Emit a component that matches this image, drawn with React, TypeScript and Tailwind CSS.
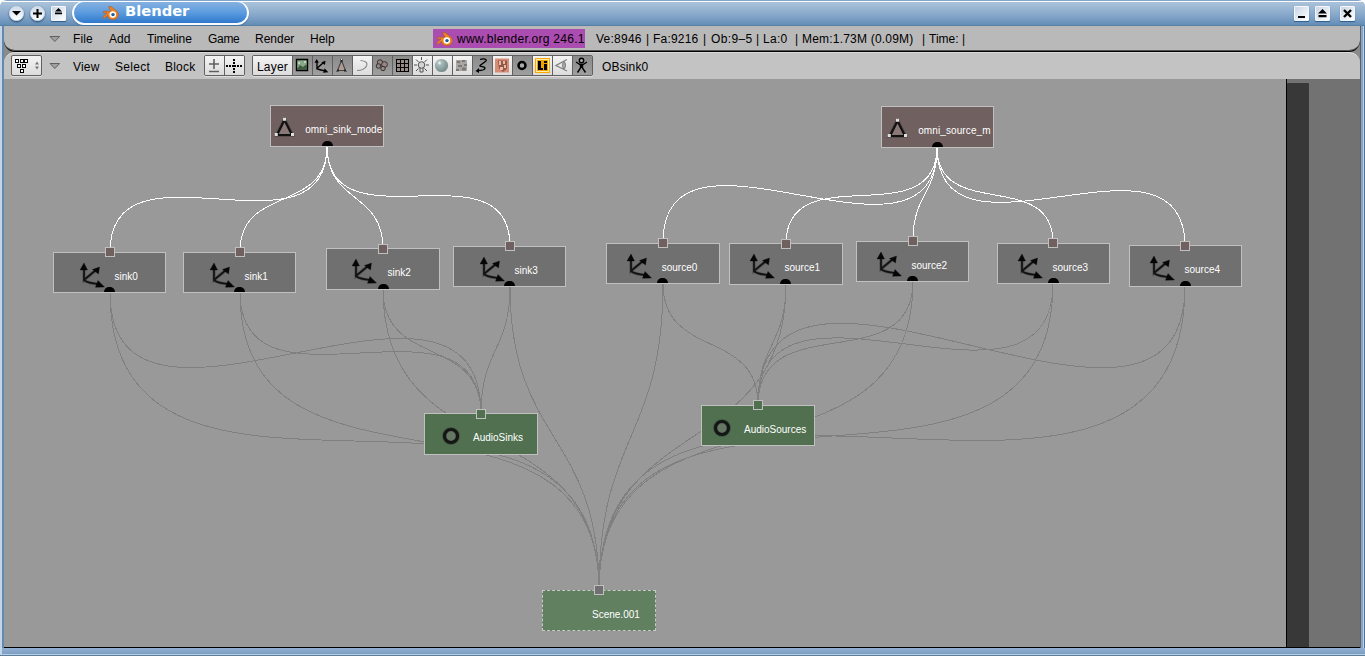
import React from "react";

type Kind = "mesh" | "object" | "group" | "scene";
type NodeDef = {
  id: string;
  kind: Kind;
  x: number;
  y: number;
  w: number;
  h: number;
  px: number;
  py?: number;
  dot?: number;
  icon: [number, number];
  tx: number;
  base: number;
  track?: string;
};

const nodes: NodeDef[] = [
  { id: "omni_sink_mode", kind: "mesh", x: 270, y: 105, w: 114, h: 42, px: 327, dot: 322, icon: [274, 117], tx: 305, base: 133, track: "tracking-[0.12px]" },
  { id: "omni_source_m", kind: "mesh", x: 881, y: 106, w: 113, h: 42, px: 937, dot: 932, icon: [887, 118], tx: 918, base: 134, track: "tracking-[0.1px]" },
  { id: "sink0", kind: "object", x: 53, y: 252, w: 113, h: 41, px: 110, py: 247, dot: 104, icon: [80, 263], tx: 114.3, base: 280 },
  { id: "sink1", kind: "object", x: 183, y: 252, w: 113, h: 41, px: 240, py: 247, dot: 234, icon: [210, 263], tx: 244.3, base: 280 },
  { id: "sink2", kind: "object", x: 326, y: 248, w: 114, h: 42, px: 383, py: 244, dot: 378, icon: [352, 259], tx: 387.3, base: 276 },
  { id: "sink3", kind: "object", x: 453, y: 246, w: 113, h: 41, px: 510, py: 241, dot: 504, icon: [480, 257], tx: 514.3, base: 274 },
  { id: "source0", kind: "object", x: 606, y: 243, w: 114, h: 41, px: 663, py: 238, dot: 657, icon: [627, 254], tx: 661.5, base: 271 },
  { id: "source1", kind: "object", x: 729, y: 243, w: 114, h: 42, px: 786, py: 239, dot: 780, icon: [750, 254], tx: 784.3, base: 271 },
  { id: "source2", kind: "object", x: 856, y: 241, w: 113, h: 41, px: 913, py: 236, dot: 907, icon: [877, 252], tx: 911.3, base: 269 },
  { id: "source3", kind: "object", x: 997, y: 243, w: 113, h: 41, px: 1053, py: 238, dot: 1048, icon: [1018, 254], tx: 1052.3, base: 271 },
  { id: "source4", kind: "object", x: 1129, y: 245, w: 113, h: 42, px: 1185, py: 241, dot: 1180, icon: [1150, 256], tx: 1184.3, base: 273 },
  { id: "AudioSinks", kind: "group", x: 424, y: 413, w: 114, h: 42, px: 481, py: 409, icon: [441, 426], tx: 472.8, base: 441 },
  { id: "AudioSources", kind: "group", x: 701, y: 405, w: 114, h: 41, px: 758, py: 400, icon: [712, 418], tx: 743.8, base: 433 },
  { id: "Scene.001", kind: "scene", x: 542, y: 590, w: 114, h: 41, px: 599, py: 585, icon: [0, 0], tx: 591.8, base: 618 },
];

const byId = Object.fromEntries(nodes.map((n) => [n.id, n]));
const sinks = ["sink0", "sink1", "sink2", "sink3"];
const sources = ["source0", "source1", "source2", "source3", "source4"];

const fill: Record<Kind, string> = {
  mesh: "bg-[#706060]",
  object: "bg-[#707070]",
  group: "bg-[#507050]",
  scene: "bg-[#608060]",
};

const CANVAS_X = 4;
const CANVAS_Y = 79;

function link(from: string, to: string) {
  const a = byId[from];
  const b = byId[to];
  const x1 = a.px;
  const y1 = a.y + a.h - 1;
  const x2 = b.px;
  const y2 = (b.py ?? b.y) + 5;
  const d = Math.hypot(x2 - x1, y2 - y1) / 2;
  return `M${x1} ${y1}C${x1} ${y1 + d} ${x2} ${y2 - d} ${x2} ${y2}`;
}

function Axes({ size }: { size: number }) {
  return (
    <svg width={size} height={size} viewBox="0 0 24 24" className="overflow-visible">
      <path d="M4 5V17L16 7M4.500 17.500C8 20 12 20.500 18 21" fill="none" stroke="#000" strokeOpacity=".25" strokeWidth="3.200" />
      <path d="M4 5V17L16 7M4.500 17.500C8 20 12 20.500 18 21" fill="none" stroke="#111" strokeWidth="1.700" />
      <path d="M4 0L7.500 7H0zM19.500 4L18.500 11 12.500 6.500zM24.500 24L15.500 24.300 18 17.500z" fill="#060606" stroke="#000" strokeOpacity=".3" />
    </svg>
  );
}

function Mesh({ size }: { size: number }) {
  return (
    <svg width={size} height={size} viewBox="0 0 21 21">
      <path d="M10.500 3L18 18H3z" fill="#8a7878" stroke="#000" strokeOpacity=".25" strokeWidth="3.600" />
      <path d="M10.500 3L18 18H3z" fill="#8a7878" stroke="#111" strokeWidth="2.200" />
      <path d="M9 .8h3v3H9zM.8 16h3v3h-3zM17 16h3v3h-3z" fill="#dedede" />
    </svg>
  );
}

function Ring({ size }: { size: number }) {
  return (
    <svg width={size} height={size} viewBox="0 0 20 20">
      <circle cx="10" cy="10" r="6.500" fill="none" stroke="#000" strokeOpacity=".22" strokeWidth="5" />
      <circle cx="10" cy="10" r="6.500" fill="#777f77" fillOpacity=".5" stroke="#151515" strokeWidth="3.200" />
    </svg>
  );
}

function Logo({ className = "" }: { className?: string }) {
  return (
    <svg width="17" height="14" viewBox="0 0 17 14" className={className}>
      <path d="M6.500 .800L9 .400 15 5.200A5 5 0 0 1 11 13.600 5.200 5.200 0 0 1 5.500 9.600L2 12.400 .600 11 5 7H1.600V5.200H9z" fill="#f08020" stroke="#a85a28" strokeWidth=".6" />
      <circle cx="10.800" cy="8.600" r="3.300" fill="#fff" />
      <circle cx="11" cy="8.600" r="1.700" fill="#1e5a96" />
    </svg>
  );
}

function GraphNode({ n }: { n: NodeDef }) {
  return (
    <>
      <div
        className={`absolute border ${n.kind === "scene" ? "border-dashed border-[#c8c8c8]" : "border-[#c0c0c0]"} ${fill[n.kind]}`}
        style={{ left: n.x - CANVAS_X, top: n.y - CANVAS_Y, width: n.w, height: n.h }}
      />
      <div className="absolute" style={{ left: n.icon[0] - CANVAS_X, top: n.icon[1] - CANVAS_Y }}>
        {n.kind === "object" && <Axes size={24} />}
        {n.kind === "mesh" && <Mesh size={21} />}
        {n.kind === "group" && <Ring size={20} />}
      </div>
      <span
        className={`absolute whitespace-pre text-[10px] leading-3 text-white ${n.track ?? ""}`}
        style={{ left: n.tx + 0.2 - CANVAS_X, top: n.base - 9.5 - CANVAS_Y }}
      >
        {n.id}
      </span>
      {n.py !== undefined && (
        <div
          className={`absolute size-2.5 border border-[#c0c0c0] ${n.kind === "object" ? "bg-[#706060]" : n.kind === "group" ? "bg-[#507050]" : "bg-[#707070]"}`}
          style={{ left: n.px - 5 - CANVAS_X, top: n.py - CANVAS_Y }}
        />
      )}
      {n.dot !== undefined && (
        <div
          className="absolute h-[5px] w-[11px] rounded-t-[5px] bg-black"
          style={{ left: n.dot - CANVAS_X, top: n.y + n.h - 6 - CANVAS_Y }}
        />
      )}
    </>
  );
}

function Canvas() {
  return (
    <div className="relative h-[568px] w-[1282px] overflow-hidden bg-[#999999]">
      <svg className="absolute inset-0" width="1282" height="568" viewBox="4 79 1282 568" fill="none" shapeRendering="crispEdges">
        <g stroke="#808080">
          {sinks.map((s) => <path key={s} d={link(s, "AudioSinks")} />)}
          {sources.map((s) => <path key={s} d={link(s, "AudioSources")} />)}
          {[...sinks, ...sources].map((s) => <path key={s} d={link(s, "Scene.001")} />)}
        </g>
        <g stroke="#fff">
          {sinks.map((s) => <path key={s} d={link("omni_sink_mode", s)} />)}
          {sources.map((s) => <path key={s} d={link("omni_source_m", s)} />)}
        </g>
      </svg>
      {nodes.map((n) => <GraphNode key={n.id} n={n} />)}
    </div>
  );
}

function RoundButton({ children }: { children: React.ReactNode }) {
  return (
    <div className="size-[15px] rounded-full border border-[#d5e0ec] bg-linear-to-b from-[#cfdbe8] to-white shadow-[0_1px_2px_#24466e]">
      <svg width="13" height="13" viewBox="0 0 13 13">{children}</svg>
    </div>
  );
}

function SquareButton({ children, className = "" }: { children: React.ReactNode; className?: string }) {
  return (
    <div className={`size-[15px] rounded-[1px] border border-[#f4f8fc] bg-linear-to-br from-[#c9d6e4] to-white shadow-[0_1px_1px_#2c5a8c] ${className}`}>
      <svg width="13" height="13" viewBox="0 0 13 13">{children}</svg>
    </div>
  );
}

function TitleBar() {
  return (
    <div className="flex h-[25px] shrink-0 items-start border-t border-white bg-linear-to-b from-[#a8c1d9] from-5% via-[#83a4c8] via-60% to-[#5f8ab3] pl-[9px] pr-[10px] shadow-[inset_0_-1px_0_#5680a6]">
      <div className="mt-[4px] flex gap-[6px]">
        <RoundButton><path d="M2 4h9l-4.500 4.500z" fill="#000" /></RoundButton>
        <RoundButton><path d="M5.500 2h2v3.500h3.500v2h-3.500v3.500h-2v-3.500h-3.500v-2h3.500z" fill="#000" /></RoundButton>
        <SquareButton><path d="M3 4.500L6.500 1 10 4.500zM3 5.500h7v1.700H3z" fill="#000" /></SquareButton>
      </div>
      <div className="-mt-px ml-[6px] flex h-6 w-[177px] items-start rounded-[12px] border-2 border-t border-[#f8fbff] bg-linear-to-b from-[#86b1df] via-[#5799de] via-55% to-[#2f78cc] pl-[28px] shadow-[0_1px_1px_#456f9c]">
        <Logo className="mt-[4px]" />
        <span className="ml-[6px] -mt-px font-['DejaVu_Sans'] text-[14.7px] font-bold leading-5 text-white">Blender</span>
      </div>
      <div className="ml-auto mt-[4px] flex">
        <SquareButton><path d="M3 9h7v2H3z" fill="#000" /></SquareButton>
        <SquareButton className="ml-[6px]"><path d="M2 6.500L6.500 2 11 6.500zM2.500 8h8v2.200h-8z" fill="#000" /></SquareButton>
        <SquareButton className="ml-[10px]"><path d="M3 3L10 10M10 3L3 10" stroke="#000" strokeWidth="2.400" /></SquareButton>
      </div>
    </div>
  );
}

function MenuTriangle() {
  return (
    <svg width="12" height="8" viewBox="0 0 12 8" className="shrink-0">
      <path d="M1 1.500h9.600L5.800 6.500z" fill="#a0a0a0" stroke="#606060" />
    </svg>
  );
}

const item = "shrink-0 whitespace-pre";

function InfoHeader() {
  return (
    <div className="h-[26px] shrink-0 bg-[#8a8a8a]">
      <div className="flex h-[26px] items-center rounded-b-[11px] border-b border-black bg-[#b9b9b9] pl-[45px] text-[12px] leading-4 text-black shadow-[inset_0_-1px_0_#555]">
        <MenuTriangle />
        <span className={`${item} ml-[12px] mt-px w-9 tracking-[0.1px]`}>File</span>
        <span className={`${item} mt-px w-[38px]`}>Add</span>
        <span className={`${item} mt-px w-[61px]`}>Timeline</span>
        <span className={`${item} mt-px w-[47px] tracking-[-0.3px]`}>Game</span>
        <span className={`${item} mt-px w-[55px]`}>Render</span>
        <span className={`${item} mt-px w-[123px]`}>Help</span>
        <div className="flex h-[19px] w-[152px] shrink-0 items-center bg-[#ab4cb0] pl-[3px]">
          <Logo className="shrink-0" />
          <span className={`${item} ml-1 mt-px tracking-[0.27px]`}>www.blender.org 246.1</span>
        </div>
        <span className={`${item} ml-[11px] mt-px w-[50px] tracking-[0.25px]`}>Ve:8946</span>
        <span className={`${item} mt-px w-[7px]`}>|</span>
        <span className={`${item} mt-px w-[50px] tracking-[0.2px]`}>Fa:9216</span>
        <span className={`${item} mt-px w-[8px]`}>|</span>
        <span className={`${item} mt-px w-[45px] tracking-[0.35px]`}>Ob:9–5</span>
        <span className={`${item} mt-px w-[7px]`}>|</span>
        <span className={`${item} mt-px w-[32px] tracking-[0.3px]`}>La:0</span>
        <span className={`${item} mt-px w-[7px]`}>|</span>
        <span className={`${item} mt-px w-[120px] tracking-[0.2px]`}>Mem:1.73M (0.09M)</span>
        <span className={`${item} mt-px w-[7px]`}>|</span>
        <span className={`${item} mt-px w-[33px]`}>Time:</span>
        <span className={`${item} mt-px`}>|</span>
      </div>
    </div>
  );
}

const layerIcons: { on: boolean; icon: React.ReactNode }[] = [
  { on: true, icon: <><path d="M3.500 3.500h11v11h-11z" fill="#88a888" stroke="#000" strokeWidth="1.400" /><path d="M4 13l3-4 3 2 3-2.500 1 1v4.500H4z" fill="#405c40" /><path d="M5 6h2v2H5zM11 5h2v2h-2z" fill="#b8d8b8" /></> },
  { on: true, icon: <g transform="translate(1.500 3) scale(.55)"><path d="M4.500 5V17L16 7M5 17.500C8 20 12 20.500 18 21" fill="none" stroke="#000" strokeWidth="2.400" /><path d="M4 0L8 7H0zM20 3L19 11 12.500 6zM25 24L15.500 25 18.500 17z" /></g> },
  { on: true, icon: <><path d="M8.500 4.500L12.500 14.500h-8z" fill="#b09a94" stroke="#444" strokeWidth="1.100" /><path d="M7.500 3h2v3h-2zM3 13.500h3v2H3zM11 13.500h3v2h-3z" fill="#222" /><path d="M8 3h1v1H8zM3 13.500h1v1H3zM13 13.500h1v1h-1z" fill="#eee" /></> },
  { on: false, icon: <path d="M7.500 4.500C13 5 15 7 13.500 10C12 13 9 14.500 4 14.500" fill="none" stroke="#888" strokeWidth="1.200" /> },
  { on: true, icon: <g fill="#9b8585" stroke="#333" strokeWidth="1"><circle cx="7" cy="6.500" r="2.700" /><circle cx="11.500" cy="8.500" r="2.900" /><circle cx="5.500" cy="10" r="2.300" /><circle cx="10" cy="12.500" r="2.200" /></g> },
  { on: true, icon: <path d="M3.500 3.500h12v12h-12zM7.500 3.500v12M11.500 3.500v12M3.500 7.500h12M3.500 11.500h12" fill="#998a8a" stroke="#000" strokeWidth="1.100" shapeRendering="crispEdges" /> },
  { on: false, icon: <g stroke="#505050" fill="none"><circle cx="8.500" cy="9" r="3.300" fill="#d5d5d5" /><path d="M7 12v4h3v-4M8.500 1v3M1 9h3M13 9h3M3 3.500l2.500 2.500M14 3.500L11.500 6M3 15l2.500-2.500M14 15l-2.500-2.500" /></g> },
  { on: false, icon: <><defs><radialGradient id="ball" cx=".35" cy=".3" r=".7"><stop offset="0" stopColor="#f4ffff" /><stop offset=".25" stopColor="#a7b9b9" /><stop offset="1" stopColor="#788c8c" /></radialGradient></defs><circle cx="8.500" cy="9.500" r="6.600" fill="url(#ball)" /></> },
  { on: false, icon: <><path d="M3 4h11v11H3z" fill="#aaa6a4" /><path d="M4 5h3v2H4zM9 4h3v2H9zM11 8h3v2h-3zM5 9h4v2H5zM3 13h3v2H3zM9 11.500h4v3H9z" fill="#7c7876" /></> },
  { on: true, icon: <><path d="M7 3.500c4-1.500 7 0 6 1.500L7 9.500c-1 1.500 5 .5 5 2.500s-4 2.500-7 2.500" fill="none" stroke="#000" strokeWidth="1.300" /><path d="M2.500 15l3.500-3v5z" /></> },
  { on: false, icon: <><path d="M2 2.500h14v14H2z" fill="#d98c74" /><path d="M5 4.500h9v8l-4 3.500-4-3.500z" fill="#8d5a4c" /><path d="M6 5h2v4H6zM10 5h2v3h-2zM11 9h2v3h-2zM7 11h3v3H7z" fill="#f0b8a0" /></> },
  { on: true, icon: <circle cx="9" cy="9.500" r="3.500" fill="#aaa" stroke="#000" strokeWidth="2.500" /> },
  { on: false, icon: <g shapeRendering="crispEdges"><path d="M2 2h15v15H2z" fill="#ffa800" /><path d="M3.500 3.500h12v12h-12z" fill="#f0a000" stroke="#fff0b0" strokeWidth="1" /><path d="M5 5h3v7h2v2H5zM11 5h3v2h-3zM11 8h3v6h-3z" fill="#000" /></g> },
  { on: false, icon: <><path d="M14 3.500L3 9.500l11 5.500" fill="none" stroke="#808080" strokeWidth="1.300" /><path d="M11 5.500c-2 2-2 6 0 7.500 2-1.500 2-6 0-7.500z" fill="#aaa" stroke="#777" /></> },
  { on: true, icon: <><circle cx="8.500" cy="4.500" r="2.200" fill="#aaa" stroke="#000" strokeWidth="1.400" /><path d="M3 6l4 2.500h3L14 6M8.500 8v4M7.500 8v4l-3 4.500M9.500 8v4l3 4.500" fill="none" stroke="#000" strokeWidth="1.400" /></> },
];

function ButtonGroup({ children, className = "" }: { children: React.ReactNode; className?: string }) {
  return (
    <div className={`flex h-[21px] shrink-0 overflow-hidden rounded-[2px] border border-[#606060] shadow-[0_1px_0_#dedede] ${className}`}>
      {children}
    </div>
  );
}

const raised = "bg-linear-to-b from-[#f4f4f4] to-[#dcdcdc]";
const pressed = "bg-linear-to-b from-[#8b8b8b] to-[#9f9f9f]";

function OopsHeader() {
  return (
    <div className="h-[27px] shrink-0 bg-[#8a8a8a]">
      <div className="flex h-[27px] items-start rounded-t-[11px] border-t border-[#dadada] bg-[#c3c3c3] pl-[7px] pt-[2px] text-[12px] leading-4 text-black">
        <ButtonGroup className={`w-[31px] ${raised}`}>
          <svg width="29" height="19" viewBox="0 0 29 19">
            <g fill="#fff" stroke="#000" shapeRendering="crispEdges">
              <path d="M3.500 3.500h3v3h-3zM8.500 3.500h3v3h-3zM12.500 3.500h3v3h-3zM5.500 8.500h3v3h-3zM10.500 8.500h3v3h-3zM8.500 13.500h3v3h-3z" />
            </g>
            <path d="M23 8.500l2-3 2 3zM23 10.500l2 3 2-3z" fill="#777" />
          </svg>
        </ButtonGroup>
        <div className="ml-[7px] mt-[7px]"><MenuTriangle /></div>
        <span className={`${item} ml-[12px] mt-1 w-[42px] tracking-[0.2px]`}>View</span>
        <span className={`${item} mt-1 w-[50px] tracking-[0.3px]`}>Select</span>
        <span className={`${item} mt-1 w-[39px] tracking-[0.2px]`}>Block</span>
        <ButtonGroup className="w-[41px]">
          <div className={`w-5 border-r border-[#606060] ${raised}`}>
            <svg width="19" height="19" viewBox="0 0 19 19"><path d="M9 3v10M4 8h10M4 15.500h10" stroke="#606060" strokeWidth="1.600" /></svg>
          </div>
          <div className={`w-5 ${raised}`}>
            <svg width="19" height="19" viewBox="0 0 19 19" shapeRendering="crispEdges">
              <path d="M8 3h2v2H8zM8 6h2v2H8zM8 12h2v2H8zM8 15h2v2H8zM1 9h2v2H1zM4 9h2v2H4zM7 9h4v2H7zM12 9h2v2h-2zM15 9h2v2h-2z" />
            </svg>
          </div>
        </ButtonGroup>
        <ButtonGroup className="ml-[7px] w-[341px]">
          <div className={`w-[39px] shrink-0 whitespace-pre pl-1 pt-[3px] ${raised}`}><span className="tracking-[0.2px]">Layer</span></div>
          {layerIcons.map((b, i) => (
            <div key={i} className={`w-5 shrink-0 border-l border-[#606060] ${b.on ? pressed : raised}`}>
              <svg width="19" height="19" viewBox="0 0 19 19">{b.icon}</svg>
            </div>
          ))}
        </ButtonGroup>
        <span className={`${item} ml-[9px] mt-1 tracking-[0.15px]`}>OBsink0</span>
      </div>
    </div>
  );
}

export default function App() {
  return (
    <div className="flex h-[656px] w-[1365px] flex-col overflow-hidden bg-white font-['Liberation_Sans',Arial,sans-serif]">
      <div className="flex h-full flex-col overflow-hidden rounded-t-[7px] border-b border-b-[#5c7c9c] bg-[#85a5c8] pt-px">
        <TitleBar />
        <div className="flex h-[622px] shrink-0 border-l-2 border-r border-l-[#c2d6e8] border-r-[#4f7499]">
          <div className="w-[2px] shrink-0 bg-[#6588ae]" />
          <div className="flex w-[1356px] shrink-0 flex-col border-b border-black">
            <InfoHeader />
            <OopsHeader />
            <div className="flex h-[568px]">
              <Canvas />
              <div className="w-px bg-black" />
              <div className="flex grow items-end bg-[#727272]">
                <div className="h-[564px] w-[22px] rounded-t-[1px] bg-[#383838]" />
              </div>
            </div>
          </div>
          <div className="w-px bg-[#606060]" />
          <div className="grow bg-[#85a5c8]" />
          <div className="w-px bg-[#bad0e6]" />
        </div>
        <div className="h-[6px] shrink-0 border-l-2 border-l-[#c2d6e8] bg-linear-to-b from-[#92b0d2] to-[#7c9dc2]" />
        <div className="h-px shrink-0 bg-[#b8d0e6]" />
      </div>
    </div>
  );
}
